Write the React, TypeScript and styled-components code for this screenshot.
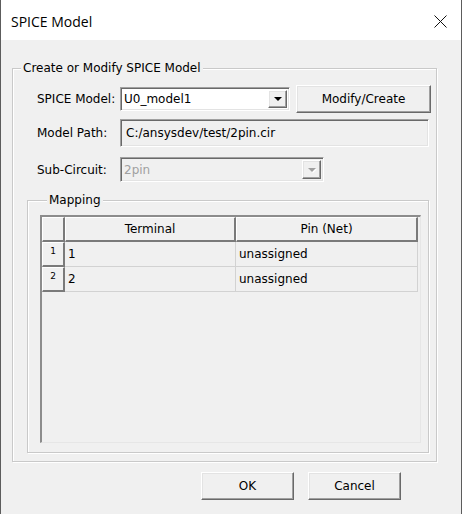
import styled, { createGlobalStyle, css } from "styled-components";

const mappings = [
  { id: 1, terminal: "1", pin: "unassigned" },
  { id: 2, terminal: "2", pin: "unassigned" },
];

export default function App() {
  return (
    <>
      <GlobalStyle />
      <Window>
        <TitleBar>
          <Title>SPICE Model</Title>
          <CloseIcon width="13" height="13" viewBox="0 0 13 13">
            <path d="M0.5 0.5 L12.5 12.5 M12.5 0.5 L0.5 12.5" stroke="#111" strokeWidth="1" />
          </CloseIcon>
        </TitleBar>

        <Body>
          <Group>
            <Caption $indent={8}>Create or Modify SPICE Model</Caption>

            <FormRow $top={10} $height={28}>
              <Label>SPICE Model:</Label>
              <Inline>
                <Combo $width={170} $height={24}>
                  <ComboText>U0_model1</ComboText>
                  <DropButton>
                    <Arrow />
                  </DropButton>
                </Combo>
                <PushButton $width={135}>Modify/Create</PushButton>
              </Inline>
            </FormRow>

            <FormRow $top={6} $height={28}>
              <Label>Model Path:</Label>
              <ReadOnlyField>C:/ansysdev/test/2pin.cir</ReadOnlyField>
            </FormRow>

            <FormRow $top={10} $height={25}>
              <Label>Sub-Circuit:</Label>
              <Combo $width={204} $height={25} $disabled>
                <ComboText $disabled>2pin</ComboText>
                <DropButton $disabled>
                  <Arrow $disabled />
                </DropButton>
              </Combo>
            </FormRow>

            <MappingGroup>
              <Caption $indent={7}>Mapping</Caption>
              <Grid>
                <HeaderCell $corner />
                <HeaderCell>Terminal</HeaderCell>
                <HeaderCell>Pin (Net)</HeaderCell>
                {mappings.map((m) => (
                  <GridRow key={m.id}>
                    <RowHeader>{m.id}</RowHeader>
                    <Cell>{m.terminal}</Cell>
                    <Cell>{m.pin}</Cell>
                  </GridRow>
                ))}
              </Grid>
            </MappingGroup>
          </Group>

          <Footer>
            <PushButton $width={93}>OK</PushButton>
            <PushButton $width={93}>Cancel</PushButton>
          </Footer>
        </Body>
      </Window>
    </>
  );
}

const GlobalStyle = createGlobalStyle`
  html, body {
    margin: 0;
    padding: 0;
    background: #ffffff;
  }

  body {
    font-family: "DejaVu Sans", Tahoma, sans-serif;
    font-size: 12px;
    color: #000000;
  }

  * {
    box-sizing: border-box;
  }
`;

const sunken = css`
  border-style: solid;
  border-width: 1px;
  border-color: #a0a0a0 #ffffff #ffffff #a0a0a0;
  box-shadow: inset 1px 1px 0 #696969, inset -1px -1px 0 #e3e3e3;
`;

const raised = css`
  border-style: solid;
  border-width: 1px;
  border-color: #ffffff #696969 #696969 #ffffff;
  box-shadow: inset -1px -1px 0 #a0a0a0, inset 1px 1px 0 #e3e3e3;
`;

const Window = styled.div`
  width: 462px;
  height: 514px;
  display: flex;
  flex-direction: column;
  background: #f0f0f0;
  border-left: 1px solid #5c5c5c;
  border-right: 1px solid #5c5c5c;
`;

const TitleBar = styled.div`
  height: 40px;
  flex-shrink: 0;
  display: flex;
  align-items: center;
  justify-content: space-between;
  padding: 2px 14px 0 10px;
  background: #ffffff;
`;

const Title = styled.span`
  font-family: "Open Sans", "Noto Sans", sans-serif;
  font-size: 14px;
  color: #000000;
`;

const CloseIcon = styled.svg`
  display: block;
`;

const Body = styled.div`
  flex: 1;
  display: flex;
  flex-direction: column;
  padding: 21px 24px 0 11px;
`;

const Group = styled.fieldset`
  min-width: 0;
  margin: 0;
  padding: 0 0 8px 0;
  border: 1px solid #c9c9c9;
  box-shadow: inset 1px 1px 0 #ffffff, 1px 1px 0 #ffffff;
`;

const Caption = styled.legend<{ $indent: number }>`
  margin-left: ${(p) => p.$indent}px;
  padding: 0 2px;
  line-height: 14px;
  background: #f0f0f0;
  color: #000000;
`;

const FormRow = styled.div<{ $top: number; $height: number }>`
  display: grid;
  grid-template-columns: 80px 1fr;
  column-gap: 3px;
  align-items: center;
  height: ${(p) => p.$height}px;
  margin-top: ${(p) => p.$top}px;
  padding-left: 24px;
`;

const Label = styled.span`
  white-space: nowrap;
  color: #000000;
`;

const Inline = styled.div`
  display: flex;
  align-items: center;
  gap: 6px;
`;

const Combo = styled.div<{ $width: number; $height: number; $disabled?: boolean }>`
  ${sunken};
  width: ${(p) => p.$width}px;
  height: ${(p) => p.$height}px;
  display: flex;
  align-items: stretch;
  padding: 2px;
  background: ${(p) => (p.$disabled ? "#f0f0f0" : "#ffffff")};
`;

const ComboText = styled.span<{ $disabled?: boolean }>`
  flex: 1;
  display: flex;
  align-items: center;
  padding-left: 1px;
  color: ${(p) => (p.$disabled ? "#a0a0a0" : "#000000")};
`;

const DropButton = styled.div<{ $disabled?: boolean }>`
  ${raised};
  width: 19px;
  display: flex;
  align-items: center;
  justify-content: center;
  background: #f0f0f0;
`;

const Arrow = styled.span<{ $disabled?: boolean }>`
  width: 0;
  height: 0;
  border-left: 4px solid transparent;
  border-right: 4px solid transparent;
  border-top: 4px solid ${(p) => (p.$disabled ? "#a0a0a0" : "#000000")};
  filter: ${(p) => (p.$disabled ? "drop-shadow(1px 1px 0 #ffffff)" : "none")};
`;

const PushButton = styled.button<{ $width: number }>`
  ${raised};
  width: ${(p) => p.$width}px;
  height: 28px;
  padding: 0;
  font-family: inherit;
  font-size: 12px;
  color: #000000;
  background: #f0f0f0;
`;

const ReadOnlyField = styled.div`
  ${sunken};
  width: 309px;
  height: 28px;
  display: flex;
  align-items: center;
  padding-left: 5px;
  background: #f0f0f0;
  color: #000000;
`;

const MappingGroup = styled.fieldset`
  min-width: 0;
  margin: 11px 7px 0 14px;
  padding: 8px 7px 9px 12px;
  border: 1px solid #c9c9c9;
  box-shadow: inset 1px 1px 0 #ffffff, 1px 1px 0 #ffffff;
`;

const Grid = styled.div`
  height: 228px;
  display: grid;
  grid-template-columns: 23px 171px 182px;
  grid-auto-rows: 25px;
  align-content: start;
  border-style: solid;
  border-width: 2px 1px 1px 2px;
  border-color: #8c8c8c #e6e6e6 #e6e6e6 #8c8c8c;
  background: #f0f0f0;
`;

const GridRow = styled.div`
  display: contents;
`;

const HeaderCell = styled.div<{ $corner?: boolean }>`
  display: flex;
  align-items: center;
  justify-content: center;
  border-style: solid;
  border-width: 1px 2px 2px 1px;
  border-color: #ffffff #7a7a7a #7a7a7a #ffffff;
  color: #000000;
`;

const RowHeader = styled.div`
  display: flex;
  justify-content: center;
  padding-top: 3px;
  font-size: 9px;
  border-style: solid;
  border-width: 1px 2px 2px 1px;
  border-color: #ffffff #7a7a7a #7a7a7a #ffffff;
  color: #000000;
`;

const Cell = styled.div`
  display: flex;
  align-items: center;
  padding-left: 3px;
  border-right: 1px solid #d2d2d2;
  border-bottom: 1px solid #d2d2d2;
  color: #000000;
`;

const Footer = styled.div`
  display: flex;
  justify-content: flex-end;
  gap: 14px;
  margin-top: 10px;
  padding-right: 36px;
`;
